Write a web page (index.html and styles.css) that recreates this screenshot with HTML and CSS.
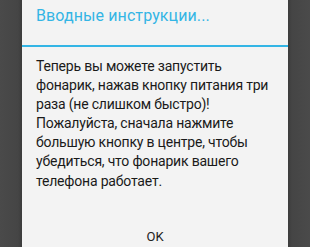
FILE: index.html
```html
<!DOCTYPE html>
<html>
<head>
<meta charset="utf-8">
<link rel="stylesheet" href="styles.css">
</head>
<body>
<div class="screen">
  <div class="dialog">
    <div class="title">Вводные инструкции...</div>
    <div class="divider"></div>
    <div class="message">Теперь вы можете запустить фонарик, нажав кнопку питания три раза (не слишком быстро)! Пожалуйста, сначала нажмите большую кнопку в центре, чтобы убедиться, что фонарик вашего телефона работает.</div>
    <div class="buttons"><span class="ok">OK</span></div>
  </div>
</div>
</body>
</html>
```
FILE: styles.css
```css
html, body {
  margin: 0;
  padding: 0;
}
body {
  width: 310px;
  height: 247px;
  overflow: hidden;
  background: #474747;
  font-family: Roboto, "Liberation Sans", sans-serif;
}
.screen {
  display: flex;
  justify-content: center;
  height: 247px;
  padding-left: 22px;
  padding-right: 22px;
  box-sizing: border-box;
  background: linear-gradient(to right, #4a4a4a 0, #454545 18px, #3c3c3c 22px, #3c3c3c 288px, #454545 292px, #4a4a4a 310px);
}
.dialog {
  width: 266px;
  height: 247px;
  background: #f3f3f3;
  display: flex;
  flex-direction: column;
}
.title {
  color: #33b5e5;
  font-size: 16px;
  line-height: 20px;
  padding: 6px 14px 0 14px;
  height: 45px;
  box-sizing: border-box;
  letter-spacing: 0.1px;
}
.divider {
  height: 2px;
  background: #33b5e5;
}
.message {
  color: #1a1a1a;
  font-size: 14px;
  line-height: 19.1px;
  letter-spacing: -0.2px;
  padding: 10px 8px 0 14px;
}
.buttons {
  margin-top: auto;
  display: flex;
  justify-content: center;
  padding-bottom: 2px;
}
.ok {
  font-size: 13px;
  line-height: 16px;
  color: #222;
}
```
